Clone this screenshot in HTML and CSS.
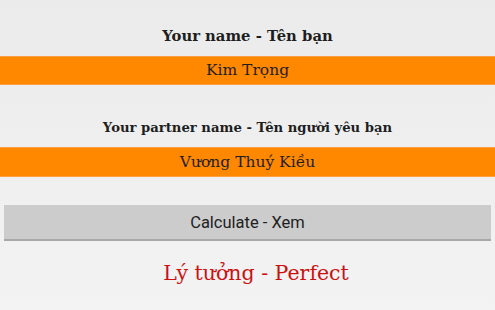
FILE: index.html
```html
<!DOCTYPE html>
<html>
<head>
<meta charset="utf-8">
<link rel="stylesheet" href="styles.css">
</head>
<body>
<main class="screen">
  <div class="label label-main">Your name - Tên bạn</div>
  <div class="name-bar name-bar-first">Kim Trọng</div>
  <div class="label label-partner">Your partner name - Tên người yêu bạn</div>
  <div class="name-bar name-bar-second">Vương Thuý Kiều</div>
  <button class="calc-button">Calculate - Xem</button>
  <div class="result">Lý tưởng - Perfect</div>
</main>
</body>
</html>
```
FILE: styles.css
```css
html, body {
  margin: 0;
  padding: 0;
}
body {
  width: 495px;
  height: 310px;
  overflow: hidden;
  background: linear-gradient(#ebebeb, #f3f3f3);
}
.screen {
  display: flex;
  flex-direction: column;
  font-family: "DejaVu Serif", "Liberation Serif", serif;
  color: #1e1e1e;
}
.label {
  text-align: center;
  font-weight: bold;
  line-height: 20px;
  height: 20px;
}
.label-main {
  margin-top: 26px;
  font-size: 14.8px;
}
.label-partner {
  margin-top: 33px;
  font-size: 13.2px;
}
.name-bar {
  background: #ff8800;
  border-top: 1px solid #ffa040;
  border-bottom: 1px solid #ffa040;
  text-align: center;
  font-size: 15.5px;
  box-sizing: border-box;
}
.name-bar-first {
  margin-top: 10px;
  height: 29px;
  line-height: 27px;
}
.name-bar-second {
  margin-top: 9px;
  height: 30px;
  line-height: 28px;
}
.calc-button {
  margin: 28px 4px 0 4px;
  height: 36px;
  box-sizing: border-box;
  border: none;
  border-bottom: 2px solid #a8a8a8;
  background: #cccccc;
  font-family: Roboto, "Liberation Sans", sans-serif;
  font-size: 16.5px;
  color: #1e1e1e;
  padding: 0;
}
.result {
  margin-top: 17px;
  padding-left: 17px;
  text-align: center;
  font-size: 20.5px;
  line-height: 30px;
  color: #cc1111;
}
```
